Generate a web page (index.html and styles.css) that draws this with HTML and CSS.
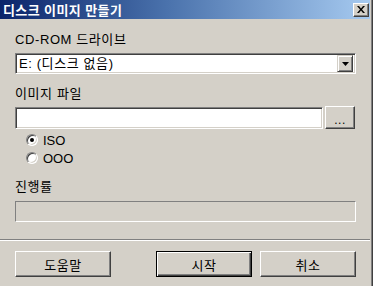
FILE: index.html
```html
<!DOCTYPE html>
<html lang="ko">
<head>
    <meta charset="UTF-8">
    <title>디스크 이미지 만들기</title>
    <link rel="stylesheet" href="styles.css">
</head>
<body>
    <div class="window">
        <div class="titlebar">
            <span class="title">디스크 이미지 만들기</span>
            <button class="close-btn" aria-label="닫기">
                <svg width="8" height="7" viewBox="0 0 8 7"><path d="M0 0h2l2 2.4 2-2.4h2l-3 3.5 3 3.5h-2l-2-2.4-2 2.4h-2l3-3.5z" fill="#000"/></svg>
            </button>
        </div>

        <div class="content">
            <div class="label label-first">CD-ROM 드라이브</div>
            <div class="combo">
                <span class="combo-text">E: (디스크 없음)</span>
                <span class="combo-btn">
                    <svg width="7" height="4" viewBox="0 0 7 4"><path d="M0 0h7l-3.5 4z" fill="#000"/></svg>
                </span>
            </div>

            <div class="label">이미지 파일</div>
            <div class="file-row">
                <div class="field"></div>
                <button class="btn browse-btn">...</button>
            </div>

            <div class="radios">
                <label class="radio-row"><span class="radio checked"></span>ISO</label>
                <label class="radio-row"><span class="radio"></span>OOO</label>
            </div>

            <div class="label label-progress">진행률</div>
            <div class="progress"></div>
        </div>

        <div class="separator"></div>

        <div class="buttons">
            <button class="btn">도움말</button>
            <div class="btn-group">
                <button class="btn default">시작</button>
                <button class="btn">취소</button>
            </div>
        </div>
    </div>
</body>
</html>
```

FILE: styles.css
```css
* {
    margin: 0;
    padding: 0;
    box-sizing: border-box;
}

body {
    width: 373px;
    height: 286px;
    overflow: hidden;
    background: #d4d0c8;
    font-family: 'Liberation Sans', 'Noto Sans CJK KR', sans-serif;
    font-size: 13px;
    color: #000;
}

.window {
    width: 373px;
    height: 286px;
    padding-right: 1px;
    border-right: 1px solid #404040;
    box-shadow: inset -1px 0 #808080;
}

.titlebar {
    width: 370px;
    height: 19px;
    display: flex;
    align-items: center;
    justify-content: space-between;
    padding: 0 1px 0 3px;
    background: linear-gradient(to right, #0a246a, #4a72ac 45%, #a6caf0);
}

.title {
    color: #fff;
    font-family: 'Noto Sans CJK KR', sans-serif;
    font-weight: bold;
    font-size: 13px;
    letter-spacing: 0.4px;
    line-height: 16px;
}

.close-btn {
    width: 16px;
    height: 14px;
    display: flex;
    align-items: center;
    justify-content: center;
    background: #d4d0c8;
    border: 1px solid;
    border-color: #fff #404040 #404040 #fff;
    box-shadow: inset -1px -1px #808080;
}

.content {
    width: 370px;
    padding: 0 14px 0 15px;
}

.label {
    line-height: 16px;
    height: 16px;
    margin-top: 12px;
    margin-bottom: 5px;
    letter-spacing: 0.6px;
}

.label-first {
    margin-top: 13px;
}

.label-progress {
    margin-top: 12px;
    margin-bottom: 6px;
}

.combo {
    height: 21px;
    display: flex;
    align-items: center;
    justify-content: space-between;
    background: #fff;
    border: 1px solid;
    border-color: #808080 #fff #fff #808080;
    box-shadow: inset 1px 1px #404040, inset -1px -1px #d4d0c8;
    padding: 0 2px 0 3px;
}

.combo-text {
    line-height: 16px;
    letter-spacing: 0.6px;
}

.combo-btn {
    width: 16px;
    height: 17px;
    display: flex;
    align-items: center;
    justify-content: center;
    background: #d4d0c8;
    border: 1px solid;
    border-color: #d4d0c8 #404040 #404040 #d4d0c8;
    box-shadow: inset 1px 1px #fff, inset -1px -1px #808080;
}

.file-row {
    display: flex;
    align-items: flex-start;
    gap: 2px;
}

.field {
    width: 308px;
    height: 22px;
    background: #fff;
    border: 1px solid;
    border-color: #808080 #fff #fff #808080;
    box-shadow: inset 1px 1px #404040, inset -1px -1px #d4d0c8;
}

.btn {
    width: 96px;
    height: 26px;
    background: #d4d0c8;
    font-family: 'Noto Sans CJK KR', sans-serif;
    font-size: 13px;
    letter-spacing: 0.5px;
    color: #000;
    border: 1px solid;
    border-color: #fff #404040 #404040 #fff;
    box-shadow: inset -1px -1px #808080;
}

.browse-btn {
    width: 30px;
    height: 23px;
    margin-top: -1px;
    font-family: 'Liberation Sans', sans-serif;
    font-size: 12px;
    line-height: 14px;
    padding-top: 4px;
    letter-spacing: 0.5px;
}

.btn.default {
    border: 1px solid #000;
    box-shadow: inset 1px 1px #fff, inset -1px -1px #404040, inset -2px -2px #808080;
}

.radios {
    padding-top: 2px;
    padding-left: 11px;
}

.radio-row {
    height: 18px;
    display: flex;
    align-items: center;
    gap: 5px;
}

.radio {
    width: 12px;
    height: 12px;
    border-radius: 50%;
    background: #fff;
    border: 1px solid;
    border-color: #808080 #fff #fff #808080;
    box-shadow: inset 1px 1px #404040, inset -1px -1px #d4d0c8;
    display: flex;
    align-items: center;
    justify-content: center;
}

.radio.checked::after {
    content: '';
    width: 4px;
    height: 4px;
    border-radius: 50%;
    background: #000;
}

.progress {
    height: 21px;
    border: 1px solid;
    border-color: #808080 #fff #fff #808080;
}

.separator {
    width: 370px;
    height: 2px;
    margin-top: 17px;
    border-top: 1px solid #808080;
    border-bottom: 1px solid #fff;
}

.buttons {
    width: 370px;
    display: flex;
    justify-content: space-between;
    padding: 10px 14px 0 15px;
}

.btn-group {
    display: flex;
    gap: 8px;
}
```
